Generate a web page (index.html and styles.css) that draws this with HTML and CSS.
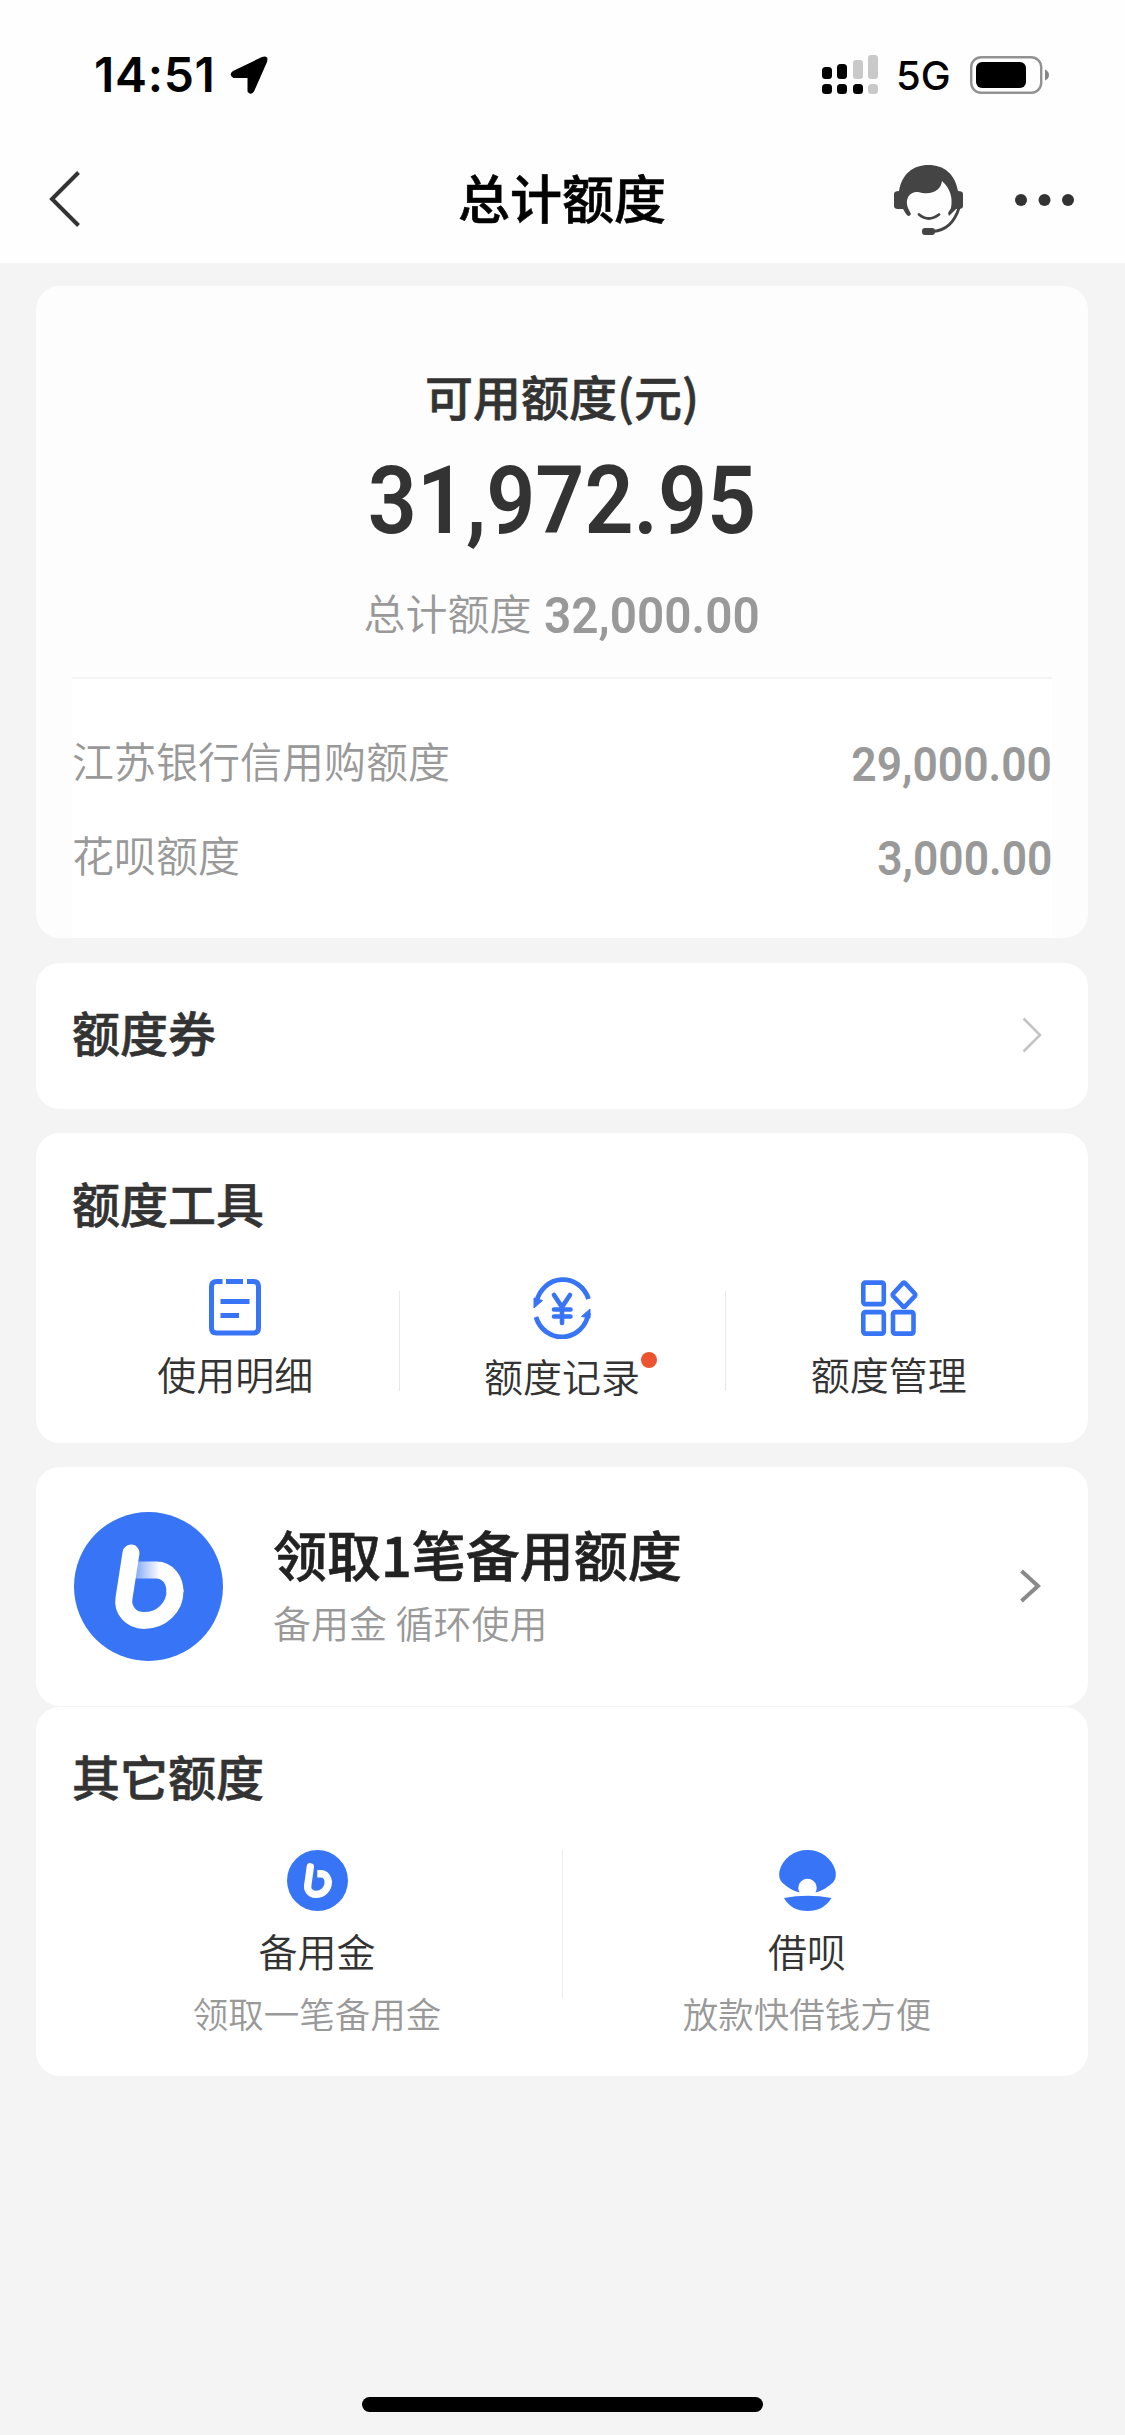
FILE: index.html
```html
<!DOCTYPE html>
<html lang="zh-CN">
<head>
<meta charset="utf-8">
<title>总计额度</title>
<link rel="stylesheet" href="styles.css">
</head>
<body>
<header class="header">
  <div class="status">
    <div class="status-left">
      <span class="time">14:51</span>
      <svg class="location" width="38" height="38" viewBox="0 0 38 38"><path d="M3 15 L32 1 Q39 -1 37 6 L24 35.500 Q20.500 40 17.500 35.500 V22 H3.500 Q-2 19 3 15Z"/></svg>
    </div>
    <div class="status-right">
      <svg class="signal" width="57" height="40" viewBox="0 0 57 40">
        <g fill="#000"><rect y="12" width="10" height="12" rx="3.500"/><rect x="15" y="9" width="10" height="15" rx="3.500"/><rect y="29" width="10" height="10" rx="3.500"/><rect x="15" y="29" width="10" height="10" rx="3.500"/><rect x="31" y="29" width="10" height="10" rx="3.500"/></g>
        <g fill="#c9c9c9"><rect x="31" y="5" width="10" height="19" rx="3"/><rect x="46" y="0" width="10" height="24" rx="3"/><rect x="46" y="29" width="10" height="10" rx="3.500"/></g>
      </svg>
      <span class="network">5G</span>
      <svg class="battery" width="80" height="38" viewBox="0 0 80 38"><rect x="1.200" y="1.200" width="70" height="35.600" rx="10" fill="none" stroke="#929292" stroke-width="2.400"/><rect x="6" y="6" width="50" height="26" rx="6"/><path d="M75 13.500 Q79 15.500 79 19 T75 24.500Z" fill="#858585"/></svg>
    </div>
  </div>
  <nav class="nav">
    <svg class="back" width="32" height="56" viewBox="0 0 32 56"><path d="M29.500 1.500 L3 28 L29.500 54.500" fill="none" stroke="#333" stroke-width="4"/></svg>
    <h1 class="nav-title">总计额度</h1>
    <div class="nav-actions">
      <svg class="service" width="70" height="70" viewBox="0 0 70 70">
        <path d="M0 29 Q0 26 5 26 C8 9 19 0 34.500 0 S61 9 64 26 Q69 26 69 29 V41 Q69 44 65 44 H62 L55 51 L54 48 L57 43 Q60 27 48 16 C47 25 38 31 24 27 C17 26 10 33 14 43 L17 49 Q15 53 12 49 L9 44 H4 Q0 44 0 41Z" fill="#444"/>
        <path d="M25 49.500 Q34.500 57.500 45 49.500" fill="none" stroke="#444" stroke-width="2.800" stroke-linecap="round"/>
        <path d="M65 43 Q58 65 39 66.500" fill="none" stroke="#444" stroke-width="2.800"/>
        <rect x="28" y="63" width="13" height="7" rx="3" fill="#444"/>
      </svg>
      <svg class="more" width="60" height="12" viewBox="0 0 60 12" fill="#333"><circle cx="6" cy="6" r="6"/><circle cx="29.500" cy="6" r="6"/><circle cx="53" cy="6" r="6"/></svg>
    </div>
  </nav>
</header>

<main class="content">
  <section class="card summary">
    <h2 class="summary-label">可用额度(元)</h2>
    <div class="amount">31,972.95</div>
    <div class="total"><span>总计额度</span><span class="total-number">32,000.00</span></div>
    <ul class="breakdown">
      <li class="breakdown-row"><span>江苏银行信用购额度</span><span class="number">29,000.00</span></li>
      <li class="breakdown-row"><span>花呗额度</span><span class="number">3,000.00</span></li>
    </ul>
  </section>

  <section class="card coupon">
    <h2 class="card-title">额度券</h2>
    <svg class="coupon-arrow" width="20" height="36" viewBox="0 0 20 36"><path d="M1.500 1.500 L18 18 L1.500 34.500" fill="none" stroke="#c4c4c4" stroke-width="2.600"/></svg>
  </section>

  <section class="card tools">
    <h2 class="card-title">额度工具</h2>
    <div class="tool-grid">
      <div class="tool">
        <svg class="tool-icon" width="62" height="62" viewBox="0 0 62 62" fill="none" stroke="#3875f6" stroke-width="5"><path d="M18.500 4.500 H12.500 Q7.500 4.500 7.500 9.500 V51 Q7.500 56 12.500 56 H49.500 Q54.500 56 54.500 51 V9.500 Q54.500 4.500 49.500 4.500 H43 M22 4.500 H39 M16.500 24.500 H45.500 M16.500 38.500 H35"/></svg>
        <span class="tool-name">使用明细</span>
      </div>
      <div class="tool">
        <svg class="tool-icon" width="62" height="62" viewBox="0 0 62 62" fill="none" stroke="#3875f6" stroke-width="4.800"><path d="M5.500 25 A27 28.300 0 0 1 57.500 22 M57.500 36 A27 28.300 0 0 1 5 40"/><path d="M3 21 V31 L11.500 23.500Z M59 41 V32 L50.500 39.500Z" fill="#3875f6" stroke-width="1"/><path d="M23 18 L31 30 L39 18 M23 32.500 H39.500 M23 39.500 H39.500 M31 30 V46" stroke-linecap="round" stroke-width="4.600"/></svg>
        <span class="tool-name shifted">额度记录<i class="dot"></i></span>
      </div>
      <div class="tool">
        <svg class="tool-icon" width="62" height="62" viewBox="0 0 62 62" fill="none" stroke="#3875f6" stroke-width="4.600"><rect x="5.300" y="5.600" width="20.500" height="21.500" rx="2"/><rect x="5.300" y="35.100" width="20.500" height="21.500" rx="2"/><rect x="35" y="35.100" width="20.500" height="21.500" rx="2"/><path d="M44.500 6.500 Q46 4.500 47.500 6.500 L56.500 16.300 Q58 18 56.500 19.500 L47.500 29 Q46 31 44.500 29 L35.500 19.500 Q34 18 35.500 16.300Z"/></svg>
        <span class="tool-name">额度管理</span>
      </div>
    </div>
  </section>

  <section class="card promo">
    <svg class="promo-logo" width="149" height="149" viewBox="0 0 149 149">
      <defs><linearGradient id="fold" gradientUnits="userSpaceOnUse" x1="60" y1="0" x2="86" y2="0"><stop offset="0" stop-color="#fff" stop-opacity=".35"/><stop offset="1" stop-color="#fff"/></linearGradient></defs>
      <circle cx="74.500" cy="74.500" r="74.500" fill="#3875f6"/>
      <path d="M61 58 H82 C94 58 101 68 101 80" fill="none" stroke="url(#fold)" stroke-width="17"/>
      <path d="M57 41 L50 86 C48 98 57 108.500 70 108.500 C88 108.500 101 95 101 79" fill="none" stroke="#fff" stroke-width="17" stroke-linecap="round"/>
    </svg>
    <div class="promo-text">
      <h2 class="promo-title">领取1笔备用额度</h2>
      <p class="promo-note">备用金 循环使用</p>
    </div>
    <svg class="promo-arrow" width="22" height="36" viewBox="0 0 22 36"><path d="M2.500 3 L19 18 L2.500 33" fill="none" stroke="#8a8a8a" stroke-width="4"/></svg>
  </section>

  <section class="card others">
    <h2 class="card-title">其它额度</h2>
    <div class="other-grid">
      <div class="other">
        <svg class="other-icon" width="61" height="61" viewBox="0 0 149 149"><circle cx="74.500" cy="74.500" r="74.500" fill="#3875f6"/><path d="M74 58 H82 C94 58 101 68 101 80" fill="none" stroke="#fff" stroke-width="18"/><path d="M57 41 L51 84 C48 98 57 108.500 70 108.500 C88 108.500 101 95 101 79" fill="none" stroke="#fff" stroke-width="18" stroke-linecap="round"/></svg>
        <span class="other-name">备用金</span>
        <span class="other-note">领取一笔备用金</span>
      </div>
      <div class="other">
        <svg class="other-icon" width="61" height="61" viewBox="0 0 61 61" fill="#3875f6"><path d="M22.500 42.500 C16 41 10 37 5 32.500 Q1 28 2.500 21 C6 8 17 0 30.500 0 S55 8 58.500 21 Q60 28 56 32.500 C51 37 45 41 38.500 42.500 A9.200 9.200 0 1 0 22.500 42.500Z"/><path d="M7 48 Q30.500 43.500 54.500 48 C49 57 41 61 30.500 61 S12 57 7 48Z"/></svg>
        <span class="other-name">借呗</span>
        <span class="other-note">放款快借钱方便</span>
      </div>
    </div>
  </section>
</main>
<footer class="home"><div class="home-bar"></div></footer>
</body>
</html>
```
FILE: styles.css
```css
* { box-sizing: border-box; margin: 0; padding: 0; }

body {
  width: 1125px;
  height: 2435px;
  display: flex;
  flex-direction: column;
  background: #f4f4f4;
  color: #333;
  font-family: "Noto Sans CJK SC", sans-serif;
}

svg { display: block; flex: none; }
h1, h2 { font-weight: 500; -webkit-text-stroke: 0.6px currentColor; }

.header { height: 263px; background: #fefefe; }

.status {
  height: 136px;
  padding: 14px 75px 0 94px;
  display: flex;
  align-items: center;
  justify-content: space-between;
  color: #000;
  font-family: Inter, sans-serif;
}
.status-left, .status-right { display: flex; align-items: center; }
.time { font-size: 48px; font-weight: 600; line-height: 60px; letter-spacing: 0.7px; }
.location { margin-left: 14px; }
.signal { margin-right: 17px; }
.network { width: 53px; padding-top: 2px; font-size: 40px; font-weight: 500; line-height: 50px; white-space: nowrap; }
.battery { margin-left: 21px; }

.nav {
  height: 127px;
  padding: 0 50px 0 49px;
  display: grid;
  grid-template-columns: 1fr auto 1fr;
  align-items: center;
}
.back { margin-top: -1px; }
.nav-title { padding-bottom: 5px; color: #000; font-size: 52px; line-height: 76px; }
.nav-actions { display: flex; align-items: center; justify-content: flex-end; gap: 51px; }

.content { padding: 23px 37px 0 36px; }
.card { border-radius: 24px; background: #fff; }
.card-title { font-size: 48px; line-height: 70px; }

.summary {
  height: 652px;
  margin-bottom: 25px;
  padding: 74px 36px 0;
  background: #fdfdfd;
  text-align: center;
}
.summary-label { font-size: 48px; line-height: 70px; }
.amount {
  margin-top: 16px;
  font: 600 95px/110px Roboto, sans-serif;
  transform: scaleX(0.905);
}
.total {
  margin-top: 26px;
  height: 95px;
  display: flex;
  justify-content: center;
  gap: 12px;
  color: #999;
  font-size: 42px;
  font-weight: 350;
  line-height: 60px;
}
.total-number {
  margin-right: -9px;
  font: 600 50px/68px Roboto, sans-serif;
  transform: scaleX(0.955);
  transform-origin: left;
}
.breakdown {
  height: 261px;
  padding-top: 49px;
  border-top: 2px solid #f4f4f4;
  background: #fff;
  list-style: none;
}
.breakdown-row {
  height: 94px;
  display: flex;
  justify-content: space-between;
  color: #999;
  font-size: 42px;
  font-weight: 350;
  line-height: 64px;
}
.number {
  font: 600 48px/74px Roboto, sans-serif;
  transform: scaleX(0.925);
  transform-origin: right;
}

.coupon {
  height: 146px;
  margin-bottom: 24px;
  padding: 0 46px 0 36px;
  display: flex;
  align-items: center;
  justify-content: space-between;
}
.coupon .card-title { padding-bottom: 10px; }
.coupon-arrow { margin-bottom: 3px; }

.tools { height: 310px; margin-bottom: 24px; padding: 34px 36px 0; }
.tool-grid { display: grid; grid-template-columns: repeat(3, 1fr); margin-top: 40px; }
.tool { position: relative; display: flex; flex-direction: column; align-items: center; }
.tool + .tool::before {
  content: "";
  position: absolute;
  left: 0;
  top: 14px;
  width: 1px;
  height: 100px;
  background: #e8e8e8;
}
.tool-name { position: relative; margin-top: 5px; font-size: 39px; font-weight: 350; line-height: 58px; }
.shifted { margin-top: 7px; }
.dot {
  position: absolute;
  top: 6px;
  right: -17px;
  width: 16px;
  height: 16px;
  border-radius: 50%;
  background: #ec5330;
}

.promo {
  height: 239px;
  margin-bottom: 1px;
  padding: 0 47px 0 38px;
  display: flex;
  align-items: center;
}
.promo-text { flex: 1; padding: 0 0 8px 50px; }
.promo-title { color: #222; font-size: 54px; line-height: 78px; }
.promo-note { padding-top: 1px; color: #999; font-size: 38px; font-weight: 350; line-height: 56px; }
.promo-arrow { margin-bottom: 1px; }

.others { height: 369px; padding: 33px 36px 0; }
.other-grid { display: grid; grid-template-columns: 1fr 1fr; margin-top: 40px; }
.other { position: relative; display: flex; flex-direction: column; align-items: center; }
.other + .other::before {
  content: "";
  position: absolute;
  left: 0;
  top: 0;
  width: 1px;
  height: 148px;
  background: #eee;
}
.other-name { margin-top: 10px; font-size: 39px; font-weight: 350; line-height: 58px; }
.other-note { margin-top: 8px; color: #999; font-size: 35.5px; font-weight: 350; line-height: 52px; }

.home { margin-top: auto; padding-bottom: 23px; display: flex; justify-content: center; }
.home-bar { width: 401px; height: 15px; border-radius: 8px; background: #000; }
```
